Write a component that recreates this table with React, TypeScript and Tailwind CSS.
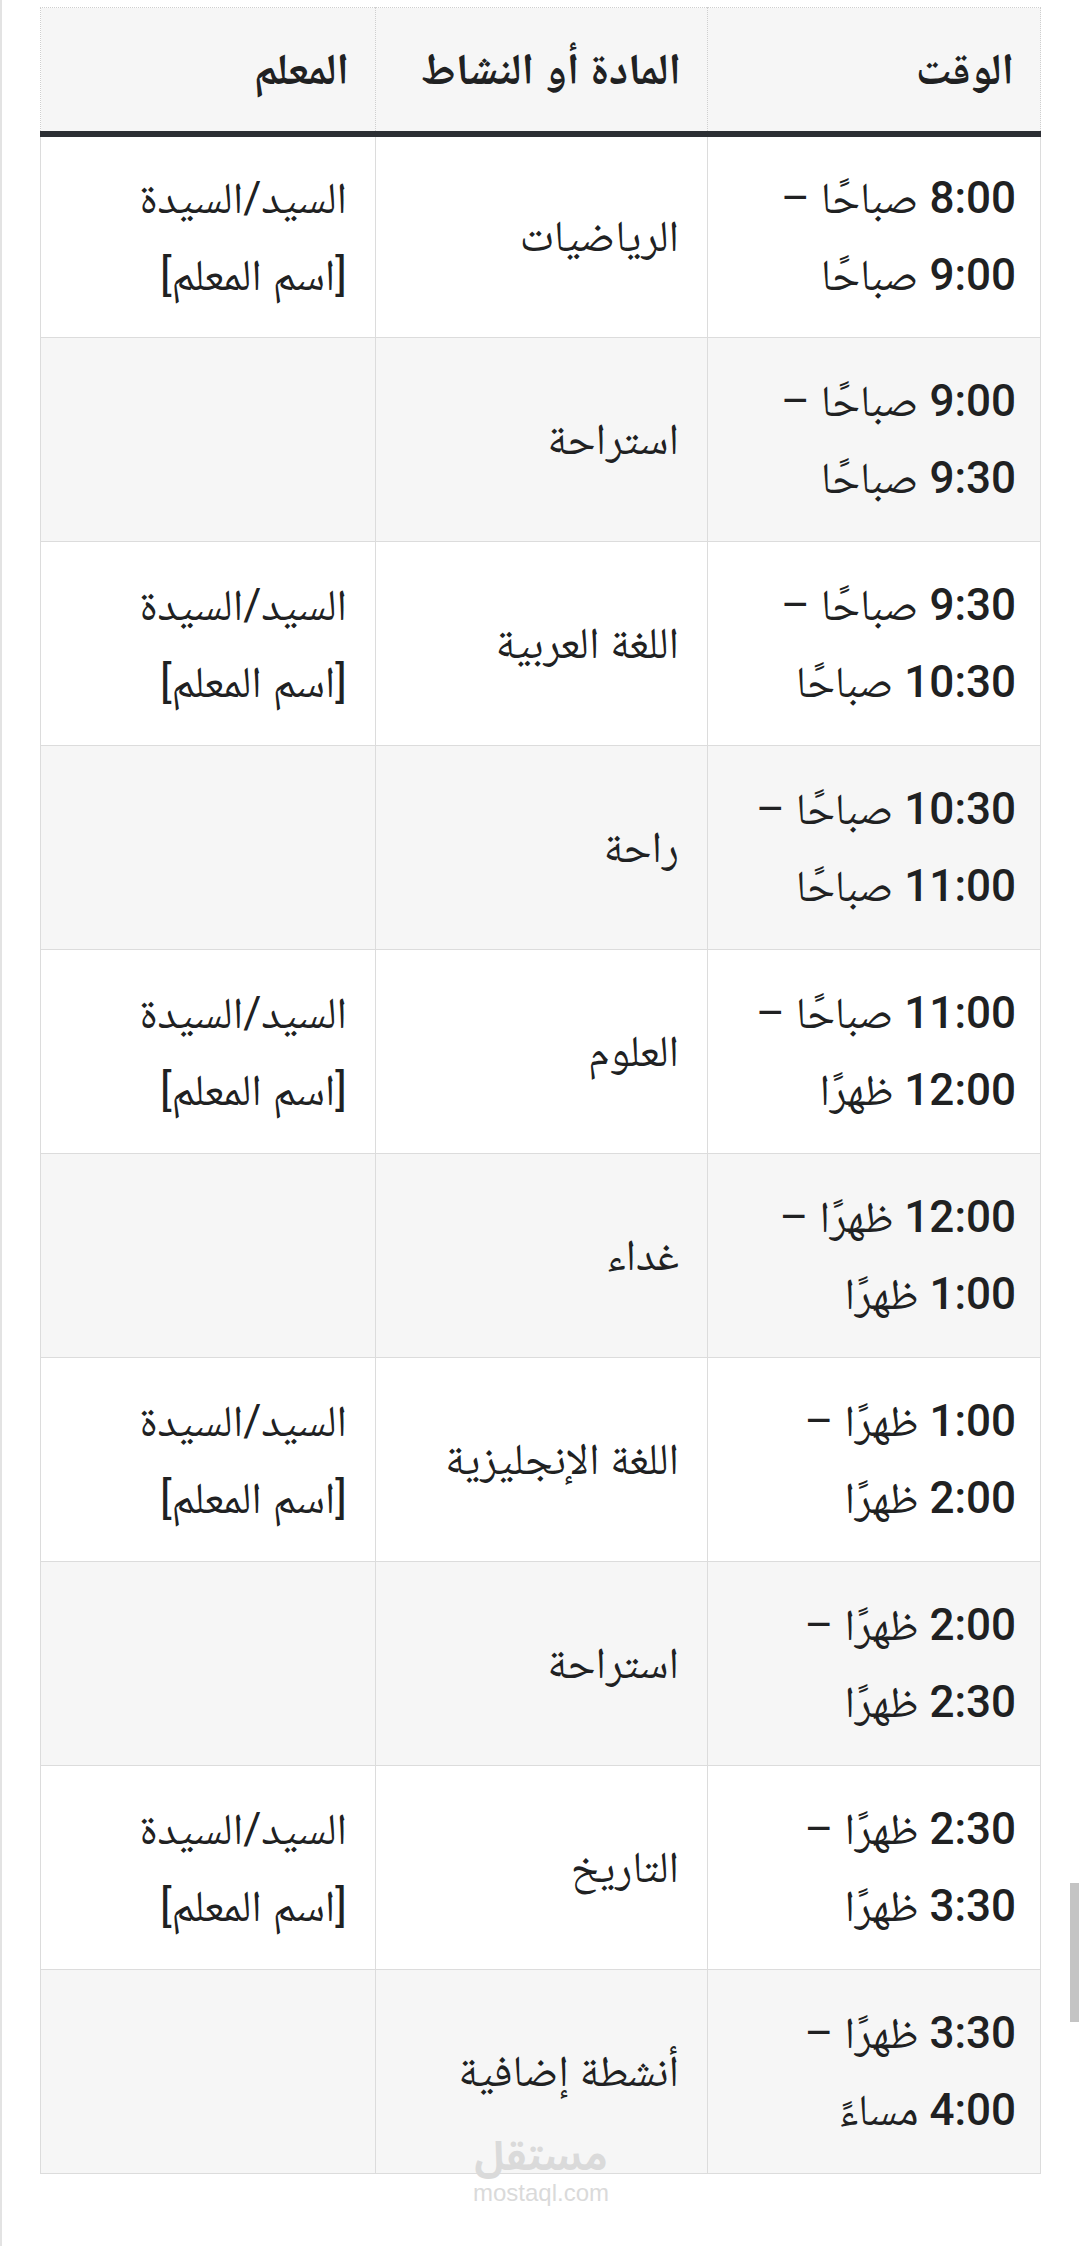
import React from "react"

type Row = {
  from: [string, string]
  to: [string, string]
  subject: string
  teacher: boolean
}

const rows: Row[] = [
  { from: ["8:00", "صباحًا"], to: ["9:00", "صباحًا"], subject: "الرياضيات", teacher: true },
  { from: ["9:00", "صباحًا"], to: ["9:30", "صباحًا"], subject: "استراحة", teacher: false },
  { from: ["9:30", "صباحًا"], to: ["10:30", "صباحًا"], subject: "اللغة العربية", teacher: true },
  { from: ["10:30", "صباحًا"], to: ["11:00", "صباحًا"], subject: "راحة", teacher: false },
  { from: ["11:00", "صباحًا"], to: ["12:00", "ظهرًا"], subject: "العلوم", teacher: true },
  { from: ["12:00", "ظهرًا"], to: ["1:00", "ظهرًا"], subject: "غداء", teacher: false },
  { from: ["1:00", "ظهرًا"], to: ["2:00", "ظهرًا"], subject: "اللغة الإنجليزية", teacher: true },
  { from: ["2:00", "ظهرًا"], to: ["2:30", "ظهرًا"], subject: "استراحة", teacher: false },
  { from: ["2:30", "ظهرًا"], to: ["3:30", "ظهرًا"], subject: "التاريخ", teacher: true },
  { from: ["3:30", "ظهرًا"], to: ["4:00", "مساءً"], subject: "أنشطة إضافية", teacher: false },
]

export default function App() {
  return (
    <div className="relative w-[1079px] h-[2246px] overflow-hidden bg-white border-l-2 border-[#e3e3e3] pt-[7px] pl-[38px] font-['Roboto','Noto_Naskh_Arabic','Noto_Sans_Arabic','DejaVu_Sans',sans-serif] text-[#202122]">
      <table dir="rtl" className="w-[1000px] table-fixed border-collapse text-[44px] leading-[77px]">
        <colgroup>
          <col className="w-[333px]" />
          <col className="w-[332px]" />
          <col className="w-[335px]" />
        </colgroup>
        <thead>
          <tr className="border-b-[6px] border-[#2c2f34]">
            <HeadCell>الوقت</HeadCell>
            <HeadCell>المادة أو النشاط</HeadCell>
            <HeadCell>المعلم</HeadCell>
          </tr>
        </thead>
        <tbody>
          {rows.map((r, i) => (
            <tr key={i} className={i % 2 === 1 ? "bg-[#f6f6f6]" : "bg-white"}>
              <td className="h-[204px] border border-[#dcdcdc] px-[24px] align-middle text-right">
                <div>
                  <span className="font-medium">{r.from[0]}</span> {r.from[1]} –
                </div>
                <div>
                  <span className="font-medium">{r.to[0]}</span> {r.to[1]}
                </div>
              </td>
              <td className="h-[204px] border border-[#dcdcdc] px-[28px] align-middle text-right">
                {r.subject}
              </td>
              <td className="h-[204px] border border-[#dcdcdc] px-[28px] align-middle text-right">
                {r.teacher && (
                  <>
                    <div>السيد/السيدة</div>
                    <div>[اسم المعلم]</div>
                  </>
                )}
              </td>
            </tr>
          ))}
        </tbody>
      </table>

      {/* watermark */}
      <div className="absolute left-[470px] top-[2134px] w-[138px] flex flex-col items-center text-[#dadada] pointer-events-none">
        <span className="text-[40px] leading-[48px] font-bold font-['Noto_Sans_Arabic','DejaVu_Sans',sans-serif]">مستقل</span>
        <span className="text-[24px] leading-[22px] font-['Liberation_Sans',sans-serif]">mostaql.com</span>
      </div>

      {/* scrollbar */}
      <div className="absolute right-0 top-[1883px] w-[9px] h-[139px] bg-[#c4c4c4]" />
    </div>
  )
}

function HeadCell({ children }: { children: React.ReactNode }) {
  return (
    <th className="h-[126px] bg-[#f6f6f6] border border-dotted border-[#cfcfcf] px-[26px] text-right align-middle font-bold">
      {children}
    </th>
  )
}
